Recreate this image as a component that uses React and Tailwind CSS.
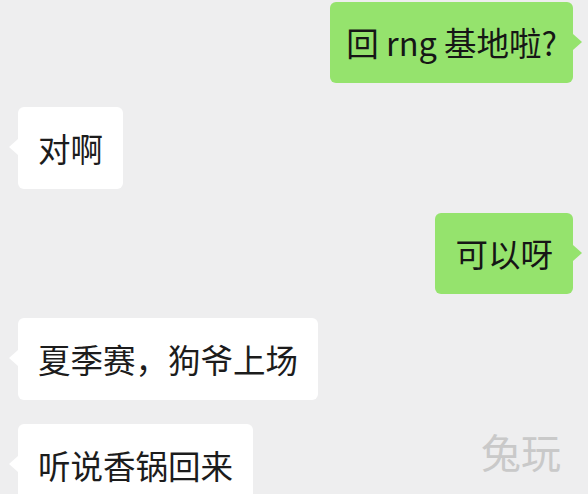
import React from "react";

const font = { fontFamily: '"Noto Sans CJK SC", "Noto Sans", sans-serif' };

function Right({ children, px = "px-[20px]" }) {
  return (
    <div className="flex justify-end pr-[15px]">
      <div className="relative">
        <div className={`rounded-[6px] bg-[#95e36d] h-[81px] flex items-center ${px} text-[32.5px] leading-none text-[#161616]`}>
          {children}
        </div>
        <div className="absolute right-[-9px] top-[32px] w-0 h-0 border-y-[8px] border-y-transparent border-l-[9px] border-l-[#95e36d]" />
      </div>
    </div>
  );
}

function Left({ children }) {
  return (
    <div className="flex justify-start pl-[18px]">
      <div className="relative">
        <div className="rounded-[6px] bg-white h-[82px] flex items-center px-[20px] text-[32.5px] leading-none text-[#1c1c1c]">
          {children}
        </div>
        <div className="absolute left-[-9px] top-[32px] w-0 h-0 border-y-[8px] border-y-transparent border-r-[9px] border-r-white" />
      </div>
    </div>
  );
}

export default function App() {
  return (
    <div className="relative w-[588px] h-[494px] overflow-hidden bg-[#eeeeef]" style={font}>
      <div className="flex flex-col gap-[24px] pt-[2px]">
        <Right px="px-[16px]">回 rng 基地啦?</Right>
        <Left>对啊</Left>
        <Right>可以呀</Right>
        <Left>夏季赛，狗爷上场</Left>
        <Left>听说香锅回来</Left>
      </div>
      <div className="absolute left-[481px] top-[431px] text-[40px] leading-none text-[#c9c9c9]">
        兔玩
      </div>
    </div>
  );
}
